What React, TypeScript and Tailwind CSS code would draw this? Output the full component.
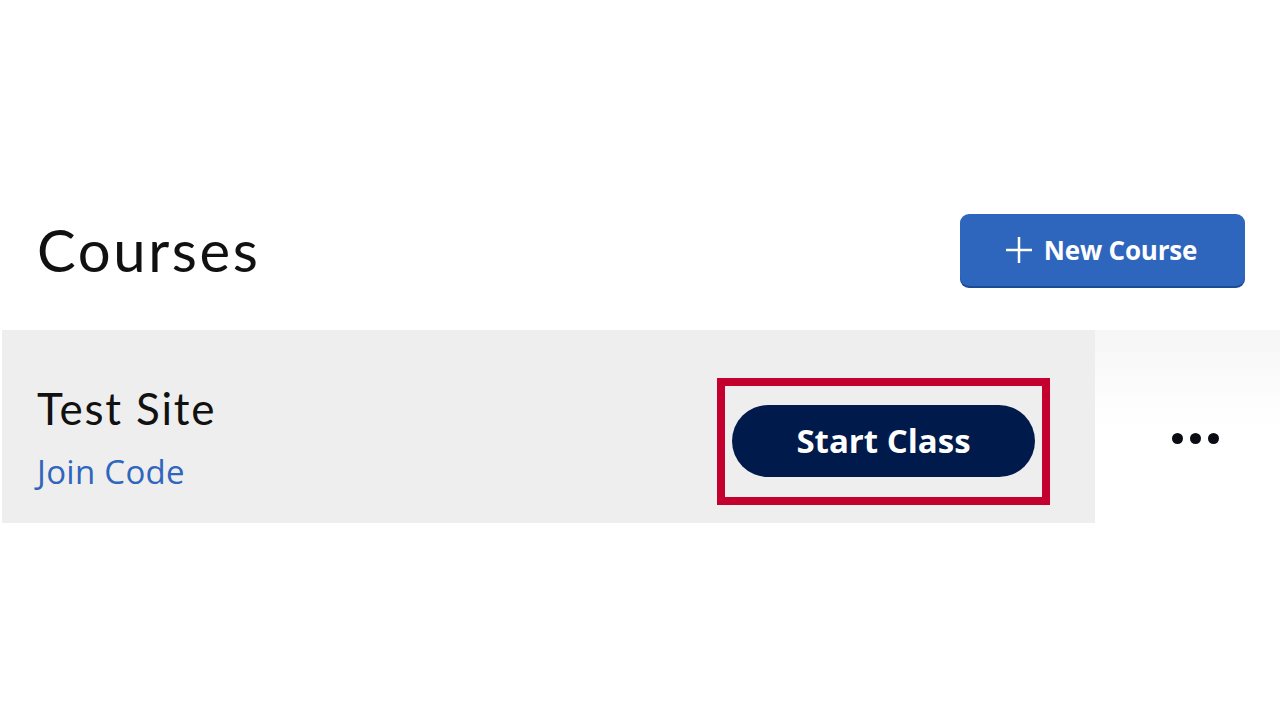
export default function App() {
  return (
    <div className="w-[1280px] h-[720px] bg-white overflow-hidden">
      {/* header */}
      <div className="flex items-center justify-between pt-[214px] pl-[37px] pr-[35px]">
        <h1 className="text-[58px] leading-none text-[#111] font-['Lato',sans-serif] tracking-[2.6px]">Courses</h1>
        <button className="flex items-center justify-center gap-[10px] w-[285px] h-[72px] rounded-[9px] bg-[#2e65bd] shadow-[0_2px_0_#1d4a94] text-white font-['Open_Sans',sans-serif] font-bold text-[26px]">
          <svg width="30" height="30" viewBox="0 0 30 30" className="-ml-[4px]">
            <path d="M15 2v26M2 15h26" stroke="white" strokeWidth="2.5" fill="none" />
          </svg>
          <span className="tracking-[-0.2px]">New Course</span>
        </button>
      </div>

      {/* course row */}
      <div className="flex mt-[44px] h-[193px]">
        <div className="ml-[2px] w-[1093px] bg-[#eeeeee] flex items-start">
          <div className="pl-[35px] pt-[50px] flex flex-col">
            <span className="text-[44px] leading-[56px] text-[#111] font-['Lato',sans-serif] tracking-[1.8px]">Test Site</span>
            <span className="text-[33px] leading-[72px] text-[#2e65bd] font-['Open_Sans',sans-serif] tracking-[0.3px]">Join Code</span>
          </div>
          <div className="ml-auto mr-[45px] mt-[48px] border-[8px] border-[#c4002f] px-[7px] pt-[19px] pb-[20px]">
            <button className="w-[303px] h-[72px] rounded-full bg-[#001a4b] text-white font-['Open_Sans',sans-serif] font-bold text-[33px] tracking-[0px]">
              Start Class
            </button>
          </div>
        </div>
        <div className="flex-1 bg-gradient-to-b from-[#f6f6f7] via-white to-white flex justify-center pt-[103px] pl-[16px]">
          <div className="flex gap-[7px] h-[11px]">
            <span className="w-[11px] h-[11px] rounded-full bg-[#0b0b14]" />
            <span className="w-[11px] h-[11px] rounded-full bg-[#0b0b14]" />
            <span className="w-[11px] h-[11px] rounded-full bg-[#0b0b14]" />
          </div>
        </div>
      </div>
    </div>
  )
}
